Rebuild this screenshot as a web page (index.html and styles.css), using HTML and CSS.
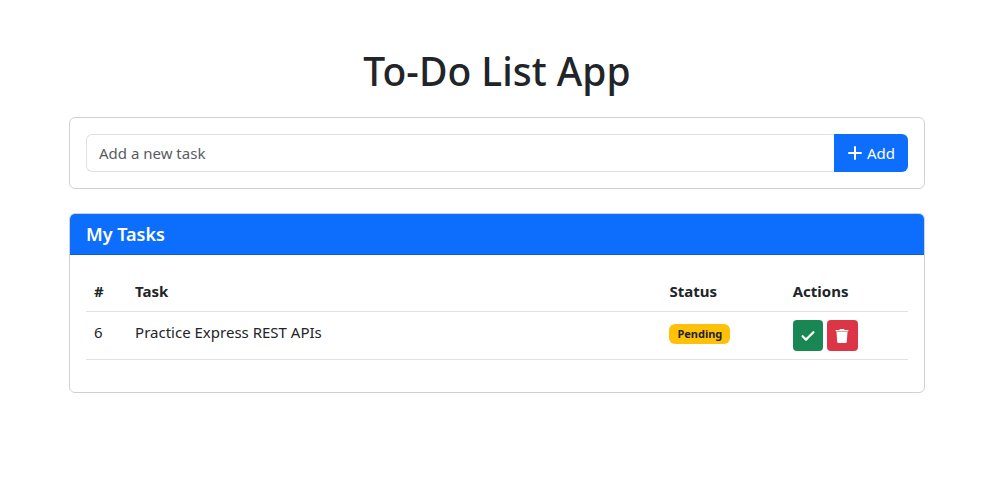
FILE: index.html
```html
<!DOCTYPE html>
<html lang="en">
<head>
<meta charset="utf-8">
<meta name="viewport" content="width=device-width, initial-scale=1">
<title>To-Do List App</title>
<link rel="stylesheet" href="styles.css">
</head>
<body>
<main class="container">
  <h1 class="title">To-Do List App</h1>
  <section class="card">
    <form class="card-body task-form">
      <input class="task-input" type="text" placeholder="Add a new task" aria-label="Add a new task">
      <button class="btn btn-add" type="submit">
        <svg class="icon-plus" viewBox="0 0 14 14" aria-hidden="true"><path d="M7 1v12M1 7h12" fill="none" stroke="currentColor" stroke-width="2" stroke-linecap="round"/></svg>
        <span>Add</span>
      </button>
    </form>
  </section>
  <section class="card">
    <header class="card-header"><h2 class="card-title">My Tasks</h2></header>
    <div class="card-body">
      <table class="table">
        <thead>
          <tr><th class="col-id" scope="col">#</th><th class="col-task" scope="col">Task</th><th class="col-status" scope="col">Status</th><th class="col-actions" scope="col">Actions</th></tr>
        </thead>
        <tbody>
          <tr>
            <td>6</td>
            <td>Practice Express REST APIs</td>
            <td><span class="badge">Pending</span></td>
            <td>
              <div class="actions">
                <button class="btn btn-small btn-done" type="button" aria-label="Complete task">
                  <svg class="icon-action" viewBox="0 0 14 14" aria-hidden="true"><path d="M1.600 7.200l3.400 3.400L12.400 3.200" fill="none" stroke="currentColor" stroke-width="2.200" stroke-linecap="round" stroke-linejoin="round"/></svg>
                </button>
                <button class="btn btn-small btn-delete" type="button" aria-label="Delete task">
                  <svg class="icon-action" viewBox="0 0 14 14" aria-hidden="true"><path fill="currentColor" d="M4.600.4Q4.800 0 5.300 0h3.400q.5 0 .7.400l.3.600h3q.8 0 .8.800t-.8.800H1.300q-.8 0-.8-.8t.8-.8h3zM1.500 3h11l-.7 9.700q-.1 1.300-1.400 1.300H3.600q-1.300 0-1.400-1.300z"/></svg>
                </button>
              </div>
            </td>
          </tr>
        </tbody>
      </table>
    </div>
  </section>
</main>
</body>
</html>
```
FILE: styles.css
```css
* { box-sizing: border-box; }
body {
  margin: 0;
  background: #fff;
  color: #212529;
  font: 15px/24px "Noto Sans", "Open Sans", sans-serif;
}
.container {
  display: flex;
  flex-direction: column;
  gap: 24px;
  padding: 48px 77px 48px 69px;
}
.title {
  margin: 0;
  font-size: 39px;
  line-height: 45px;
  font-weight: 500;
  text-align: center;
}
.card {
  border: 1px solid #d0d1d2;
  border-radius: 6px;
  background: #fff;
  overflow: hidden;
}
.card-body { padding: 16px; }
.card-header {
  padding: 8px 16px;
  background: #0d6efd;
  border-bottom: 1px solid #0b5ed7;
  color: #fff;
}
.card-title {
  margin: 0;
  font-size: 18px;
  line-height: 24px;
  font-weight: 600;
}
.task-form { display: flex; }
.task-input {
  flex: 1;
  min-width: 0;
  height: 38px;
  padding: 6px 12px;
  border: 1px solid #dee2e6;
  border-right: 0;
  border-radius: 6px 0 0 6px;
  color: inherit;
  font: inherit;
}
.task-input::placeholder { color: #595c5f; opacity: 1; }
.btn {
  display: flex;
  align-items: center;
  justify-content: center;
  border: 0;
  color: #fff;
  font: inherit;
  cursor: pointer;
}
.btn-add {
  gap: 4px;
  height: 38px;
  padding: 0 13px;
  border-radius: 0 6px 6px 0;
  background: #0d6efd;
}
.icon-plus { width: 16px; height: 14px; }
.table {
  width: 100%;
  margin-bottom: 16px;
  border-collapse: separate;
  border-spacing: 0;
  table-layout: fixed;
}
.table th, .table td {
  padding: 8px;
  border-bottom: 1px solid #dee2e6;
  text-align: left;
  vertical-align: top;
}
.table th { font-weight: 700; }
.col-id { width: 5%; }
.col-task { width: 65%; }
.col-status, .col-actions { width: 15%; }
.badge {
  display: inline-block;
  padding: 4px 8px;
  border-radius: 6px;
  background: #ffc107;
  font-size: 11px;
  line-height: 12px;
  font-weight: 700;
}
.actions { display: flex; gap: 4px; }
.btn-small {
  width: 30px;
  height: 31px;
  padding: 0;
  border-radius: 4px;
}
.btn-done { background: #198754; }
.btn-delete { width: 31px; background: #dc3545; }
.icon-action { width: 14px; height: 14px; }
```
